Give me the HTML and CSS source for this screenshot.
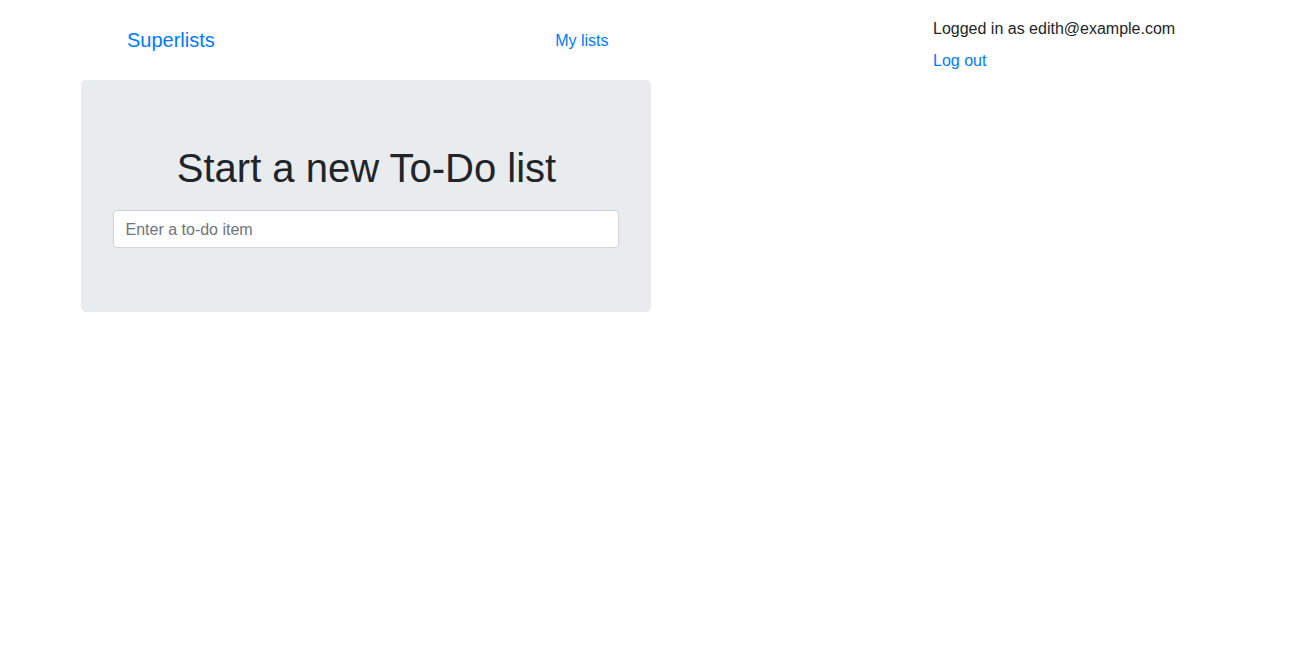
FILE: index.html
```html
<!DOCTYPE html>
<html lang="en">
<head>
<meta charset="utf-8">
<title>To-Do lists</title>
<link rel="stylesheet" href="styles.css">
</head>
<body>
<div class="page">
  <div class="main-col">
    <nav class="navbar">
      <a class="brand" href="#">Superlists</a>
      <a class="nav-link menu-link" href="#">My lists</a>
    </nav>
    <div class="jumbotron">
      <h1 class="title">Start a new To-Do list</h1>
      <form class="form">
        <input class="input" type="text" placeholder="Enter a to-do item">
      </form>
    </div>
  </div>
  <div class="side-col">
    <p class="user-text">Logged in as edith@example.com</p>
    <a class="nav-link" href="#">Log out</a>
  </div>
</div>
</body>
</html>
```
FILE: styles.css
```css
html, body {
  margin: 0;
  padding: 0;
  background: #fff;
}
body {
  font-family: "Liberation Sans", Arial, Helvetica, sans-serif;
  font-size: 16px;
  line-height: 1.5;
  color: #212529;
}
a {
  color: #007bff;
  text-decoration: none;
}
.page {
  width: 1140px;
  margin: 0 auto;
  display: flex;
}
.main-col {
  width: 570px;
  flex: none;
}
.navbar {
  height: 80px;
  display: flex;
  align-items: center;
  justify-content: space-between;
  padding: 0 42px 0 46.5px;
  box-sizing: border-box;
}
.brand {
  font-size: 20px;
  line-height: 30px;
}
.nav-link {
  font-size: 16px;
  line-height: 24px;
}
.menu-link {
  margin-top: 2px;
}
.jumbotron {
  background: #e9ecef;
  border-radius: 4.8px;
  padding: 64px 32px;
}
.title {
  margin: 0 0 18px;
  padding-left: 2px;
  font-size: 40px;
  font-weight: 500;
  line-height: 48px;
  text-align: center;
  color: #212529;
}
.form {
  margin: 0;
}
.input {
  display: block;
  width: 100%;
  box-sizing: border-box;
  height: 38px;
  padding: 7px 12px 5px;
  font-family: inherit;
  font-size: 16px;
  line-height: 24px;
  color: #495057;
  background: #fff;
  border: 1px solid #ced4da;
  border-radius: 4px;
  outline: none;
}
.input::placeholder {
  color: #6c757d;
  opacity: 1;
}
.side-col {
  flex: 1;
  padding: 17px 0 0 282.5px;
  display: flex;
  flex-direction: column;
  align-items: flex-start;
}
.user-text {
  margin: 0 0 8px;
  color: #212529;
}
```
